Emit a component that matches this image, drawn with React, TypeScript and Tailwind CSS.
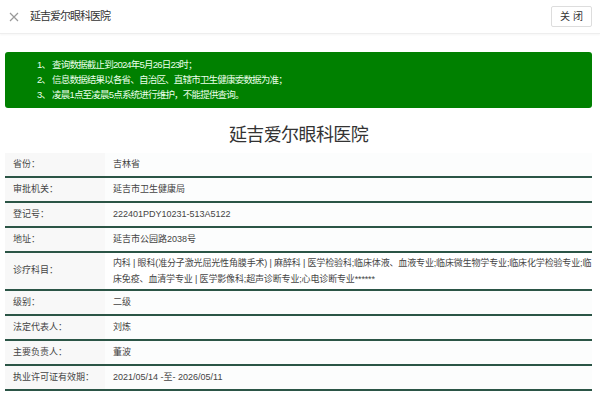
import React from "react";

const rows: { label: string; value: string }[] = [
  { label: "省份：", value: "吉林省" },
  { label: "审批机关：", value: "延吉市卫生健康局" },
  { label: "登记号：", value: "222401PDY10231-513A5122" },
  { label: "地址：", value: "延吉市公园路2038号" },
  {
    label: "诊疗科目：",
    value:
      "内科 | 眼科(准分子激光屈光性角膜手术) | 麻醉科 | 医学检验科;临床体液、血液专业;临床微生物学专业;临床化学检验专业;临床免疫、血清学专业 | 医学影像科;超声诊断专业;心电诊断专业******",
  },
  { label: "级别：", value: "二级" },
  { label: "法定代表人：", value: "刘炼" },
  { label: "主要负责人：", value: "董波" },
  { label: "执业许可证有效期：", value: "2021/05/14 -至- 2026/05/11" },
];

const App: React.FC = () => {
  return (
    <div
      className="w-[600px] h-[400px] overflow-hidden bg-white text-[#444]"
      style={{ fontFamily: '"Liberation Sans", "Noto Sans CJK SC", sans-serif' }}
    >
      {/* Header */}
      <header className="h-[34px] flex items-center justify-between pl-[9px] pr-[8px] border-b border-[#eeeeee] shadow-[0_1px_2px_rgba(0,0,0,0.04)]">
        <div className="flex items-center">
          <svg width="10" height="10" viewBox="0 0 10 10" className="mr-[11px]">
            <path d="M1 1 L9 9 M9 1 L1 9" stroke="#999" strokeWidth="1.2" />
          </svg>
          <span className="text-[11px] tracking-[-1px] text-[#333]">延吉爱尔眼科医院</span>
        </div>
        <button className="w-[41px] h-[21px] border border-[#dddddd] rounded-[2px] text-[10px] text-[#333] bg-white">
          关 闭
        </button>
      </header>

      <div className="pl-[5px] pr-[8px]">
        {/* Notice */}
        <div className="mt-[18px] h-[56px] rounded-[3px] bg-[#008000] pl-[32px] pt-[5px] text-[9.5px] tracking-[-0.8px] leading-[15px] text-[#eaffea]">
          <p>1、 查询数据截止到2024年5月26日23时；</p>
          <p>2、 信息数据结果以各省、自治区、直辖市卫生健康委数据为准；</p>
          <p>3、 凌晨1点至凌晨5点系统进行维护，不能提供查询。</p>
        </div>

        {/* Title */}
        <h1 className="mt-[14px] h-[30px] text-center text-[18px] tracking-[-0.6px] leading-[26px] text-[#333]">
          延吉爱尔眼科医院
        </h1>

        {/* Table */}
        <div className="mt-[1px] text-[9px]">
          {rows.map((row, i) => (
            <div key={i} className="flex border-b-2 border-[#2b5546]">
              <div className="w-[100px] shrink-0 whitespace-nowrap bg-[#f8f8f8] pl-[8px] flex items-center">
                {row.label}
              </div>
              <div
                className={`flex-1 pl-[8px] ${
                  row.label === "诊疗科目："
                    ? "py-[2px] leading-[16px] tracking-[-0.15px] bg-white"
                    : "h-[23px] leading-[23px] bg-[#fcfdfd]"
                }`}
              >
                {row.value}
              </div>
            </div>
          ))}
        </div>
      </div>
    </div>
  );
};

export default App;
